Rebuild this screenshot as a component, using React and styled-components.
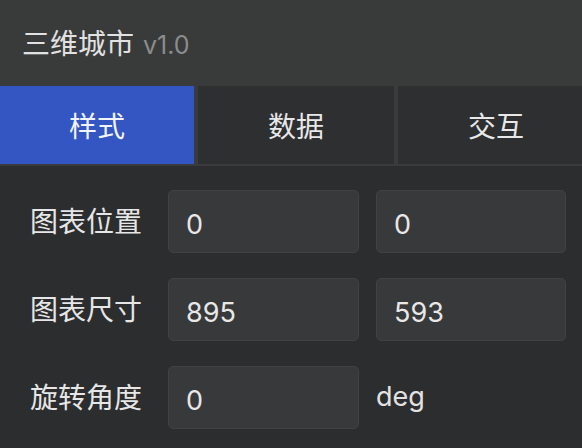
import React from "react";
import styled, { createGlobalStyle } from "styled-components";

const GlobalStyle = createGlobalStyle`
  html, body {
    margin: 0;
    padding: 0;
    background: #2c2d2f;
    overflow: hidden;
  }
  body {
    font-family: Inter, "Noto Sans CJK SC", sans-serif;
  }
`;

const Panel = styled.div`
  width: 582px;
  height: 448px;
  background: #2c2d2f;
  overflow: hidden;
`;

const Header = styled.header`
  height: 86px;
  display: flex;
  align-items: center;
  padding-left: 22px;
  background: #393a3a;
  box-sizing: border-box;
`;

const Title = styled.h1`
  margin: 0;
  font-family: "Noto Sans CJK SC", sans-serif;
  font-size: 28px;
  font-weight: 400;
  color: #e2e2e2;
  line-height: 1;
`;

const Version = styled.span`
  margin-left: 9px;
  font-family: Inter, sans-serif;
  font-size: 25px;
  color: #8c8c8c;
`;

const TabBar = styled.nav`
  display: grid;
  grid-template-columns: 194px 196px 196px;
  column-gap: 4px;
  padding-bottom: 2px;
  background: #3a3b3d;
`;

const Tab = styled.button`
  height: 78px;
  border: 0;
  padding: 0;
  font-family: "Noto Sans CJK SC", sans-serif;
  font-size: 28px;
  font-weight: 400;
  color: ${({ active }) => (active ? "#f2f4fb" : "#e8e8e8")};
  background: ${({ active }) => (active ? "#3356c3" : "#2e2f31")};
  cursor: pointer;
`;

const Form = styled.div`
  display: flex;
  flex-direction: column;
  gap: 25px;
  padding: 24px 16px 0 30px;
`;

const Row = styled.div`
  display: grid;
  grid-template-columns: 121px 191px 190px;
  column-gap: 17px;
  align-items: center;
`;

const Label = styled.label`
  font-family: "Noto Sans CJK SC", sans-serif;
  font-size: 28px;
  font-weight: 400;
  color: #e6e6e6;
  line-height: 1;
  margin-top: -3px;
  white-space: nowrap;
`;

const Field = styled.input`
  box-sizing: border-box;
  width: 100%;
  height: 63px;
  padding: 6px 0 0 17px;
  border: 1.5px solid #414244;
  border-radius: 5px;
  background: #38393a;
  color: #e8e8e8;
  font-family: Inter, sans-serif;
  font-size: 27px;
  outline: none;
`;

const Unit = styled.span`
  font-family: Inter, sans-serif;
  font-size: 27px;
  color: #e2e2e2;
  margin-top: -2px;
`;

const rows = [
  { label: "图表位置", values: ["0", "0"] },
  { label: "图表尺寸", values: ["895", "593"] },
  { label: "旋转角度", values: ["0"], unit: "deg" },
];

export default function App() {
  return (
    <Panel>
      <GlobalStyle />
      <Header>
        <Title>
          三维城市<Version>v1.0</Version>
        </Title>
      </Header>
      <TabBar>
        <Tab active>样式</Tab>
        <Tab>数据</Tab>
        <Tab>交互</Tab>
      </TabBar>
      <Form>
        {rows.map((row) => (
          <Row key={row.label}>
            <Label>{row.label}</Label>
            {row.values.map((v, i) => (
              <Field key={i} defaultValue={v} />
            ))}
            {row.unit && <Unit>{row.unit}</Unit>}
          </Row>
        ))}
      </Form>
    </Panel>
  );
}
